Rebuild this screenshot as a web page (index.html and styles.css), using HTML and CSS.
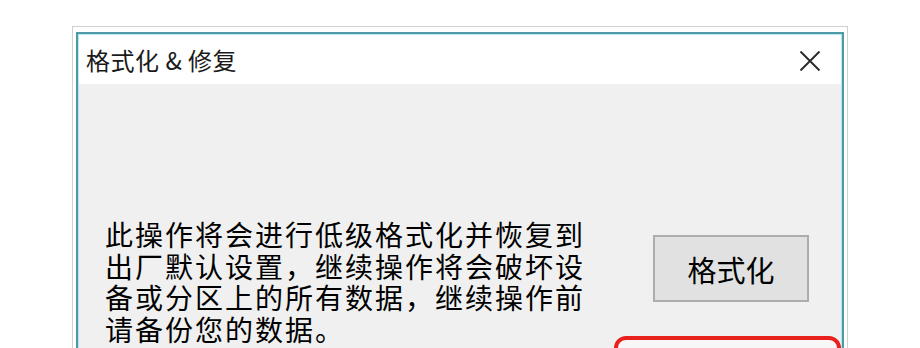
FILE: index.html
```html
<!DOCTYPE html>
<html lang="zh-CN">
<head>
<meta charset="utf-8">
<title>格式化 & 修复</title>
<link rel="stylesheet" href="styles.css">
</head>
<body>
<div class="outer">
  <div class="frame">
    <div class="titlebar">
      <span class="title">格式化 &amp; 修复</span>
      <svg class="close" width="22" height="20" viewBox="0 0 22 20" aria-hidden="true">
        <path d="M1.5 0.5 L20.5 19.5 M20.5 0.5 L1.5 19.5" stroke="#2b2b2b" stroke-width="2" fill="none"/>
      </svg>
    </div>
    <div class="content">
      <p class="message">
        <span class="line">此操作将会进行低级格式化并恢复到</span>
        <span class="line">出厂默认设置，继续操作将会破坏设</span>
        <span class="line">备或分区上的所有数据，继续操作前</span>
        <span class="line">请备份您的数据。</span>
      </p>
      <div class="actions">
        <button class="btn">格式化</button>
        <div class="highlight"></div>
      </div>
    </div>
  </div>
</div>
</body>
</html>
```

FILE: styles.css
```css
html, body {
  margin: 0;
  padding: 0;
  background: #ffffff;
  overflow: hidden;
}

body {
  font-family: "Noto Sans CJK SC", "Noto Sans", sans-serif;
}

.outer {
  margin: 26px 0 0 72px;
  width: 768px;
  height: 322px;
  border: 1px solid #d0d0d0;
  border-bottom: none;
  padding: 5px 3px 0 3px;
}

.frame {
  height: 100%;
  box-sizing: border-box;
  border: 2px solid #4f98a6;
  border-bottom: none;
  box-shadow: inset 0 0 0 1px #b4e8f2;
  background: #f0f0f0;
  display: flex;
  flex-direction: column;
}

.titlebar {
  height: 49px;
  flex: none;
  background: #ffffff;
  display: flex;
  align-items: center;
  justify-content: space-between;
  padding: 0 20px 0 7px;
  margin: 1px 1px 0 1px;
}

.title {
  font-size: 24px;
  color: #1a1a1a;
  letter-spacing: 0.5px;
}

.close {
  display: block;
  margin-top: 2px;
}

.content {
  flex: 1;
  min-height: 0;
  display: flex;
  align-items: flex-start;
  padding: 0 0 0 27px;
  overflow: hidden;
}

.message {
  margin: 137px 0 0 0;
  font-family: "Liberation Sans", "Noto Sans CJK SC", sans-serif;
  font-size: 28px;
  line-height: 31.7px;
  letter-spacing: 2px;
  color: #000;
  width: 505px;
  flex: none;
}

.line {
  display: block;
  white-space: nowrap;
}

.actions {
  margin: 151px 0 0 0;
  display: flex;
  flex-direction: column;
  align-items: flex-end;
  width: 227px;
}

.btn {
  width: 156px;
  height: 67px;
  margin-right: 28px;
  background: #e1e1e1;
  border: 2px solid #adadad;
  font-family: "Noto Sans CJK SC", "Noto Sans", sans-serif;
  font-size: 29px;
  color: #000;
  padding: 0;
  letter-spacing: 0;
}

.highlight {
  margin-top: 34px;
  width: 227px;
  height: 60px;
  box-sizing: border-box;
  border: 4px solid #e8211d;
  border-radius: 12px;
  background: #f7f7f7;
  margin-right: -4px;
}
```
